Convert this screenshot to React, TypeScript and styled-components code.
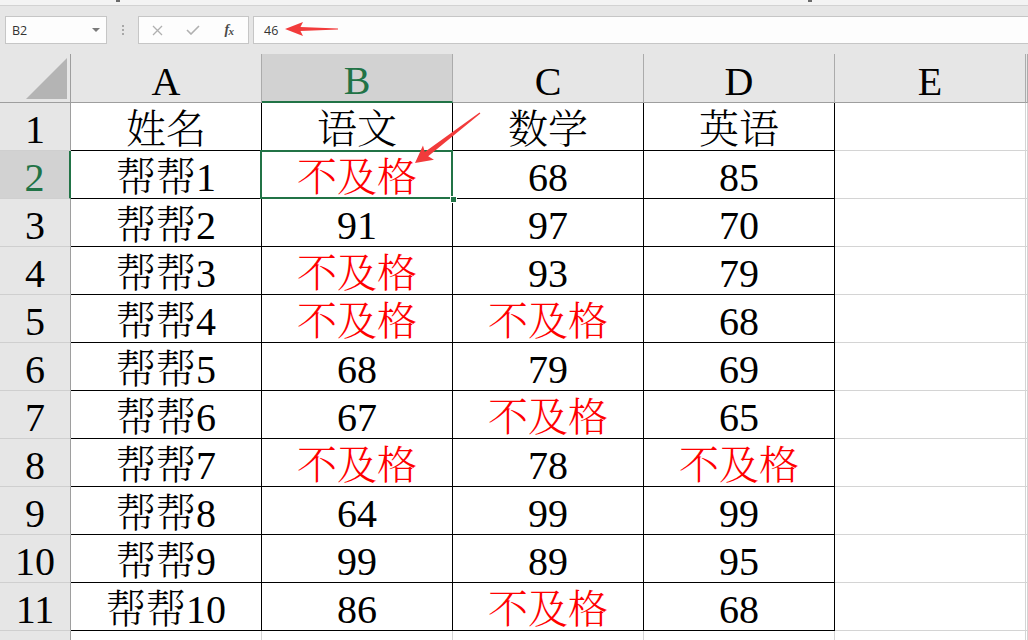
import React from "react";
import styled, { createGlobalStyle, css } from "styled-components";

const GlobalStyle = createGlobalStyle`
  *, *::before, *::after { box-sizing: border-box; }
  html, body { margin: 0; padding: 0; background: #ffffff; overflow: hidden; }
  body { width: 1028px; height: 640px; font-family: "Liberation Serif", "Noto Serif CJK SC", "Noto Sans CJK SC", serif; }
`;

const GREEN = "#217346";

const Page = styled.div`
  position: relative;
  width: 1028px;
  height: 640px;
  overflow: hidden;
`;

const TopStrip = styled.div`
  height: 6px;
  background: #f3f3f3;
  border-bottom: 1px solid #d2d2d2;
  display: flex;
  align-items: flex-start;
`;

const Mark = styled.span<{ $gap: number }>`
  margin-left: ${(p) => p.$gap}px;
  width: 4px;
  height: 2px;
  background: #6a6a6a;
`;

const FormulaBar = styled.div`
  height: 48px;
  background: #e6e6e6;
  display: flex;
  align-items: flex-start;
  padding-top: 10px;
  padding-left: 5px;
  font-family: "Open Sans", "Noto Sans", sans-serif;
  font-size: 12.5px;
  color: #333333;
`;

const NameBox = styled.div`
  width: 102px;
  height: 28px;
  background: #fdfdfd;
  border: 1px solid #c6c6c6;
  display: flex;
  align-items: center;
  justify-content: space-between;
  padding: 0 6px 0 6px;
`;

const DropArrow = styled.span`
  width: 0;
  height: 0;
  border-left: 4px solid transparent;
  border-right: 4px solid transparent;
  border-top: 4px solid #7a7a7a;
`;

const Grip = styled.div`
  width: 31px;
  height: 28px;
  display: flex;
  flex-direction: column;
  align-items: center;
  justify-content: center;
  gap: 2px;
`;

const GripDot = styled.span`
  width: 2px;
  height: 2px;
  background: #a8a8a8;
`;

const FxBox = styled.div`
  width: 111px;
  height: 28px;
  background: #fdfdfd;
  border: 1px solid #c6c6c6;
  display: flex;
  align-items: center;
`;

const FxSlot = styled.div`
  width: 36px;
  height: 100%;
  display: flex;
  align-items: center;
  justify-content: center;
`;

const FxLabel = styled.span`
  font-family: "Liberation Serif", serif;
  font-style: italic;
  font-weight: bold;
  font-size: 14px;
  color: #4a4a4a;
  letter-spacing: -0.5px;
  sub {
    font-size: 11px;
    vertical-align: -1px;
  }
`;

const Input = styled.div`
  flex: 1;
  margin-left: 4px;
  height: 28px;
  background: #fdfdfd;
  border: 1px solid #c6c6c6;
  border-right: none;
  display: flex;
  align-items: center;
  padding-left: 10px;
`;

const Sheet = styled.div`
  display: grid;
  grid-template-columns: 71px repeat(5, 191px) 1fr;
  grid-template-rows: 49px;
  grid-auto-rows: 48px;
  font-size: 40px;
  line-height: 40px;
  font-weight: 300;
`;

const HeadBase = css`
  background: #e6e6e6;
  display: flex;
  align-items: flex-end;
  justify-content: center;
  white-space: nowrap;
`;

const Corner = styled.div`
  ${HeadBase};
  justify-content: flex-end;
  border-right: 1px solid #9e9e9e;
  border-bottom: 1px solid #9e9e9e;
  padding: 0 3px 3px 0;
`;

const CornerTriangle = styled.span`
  width: 41px;
  height: 41px;
  background: #b4b4b4;
  clip-path: polygon(100% 0, 100% 100%, 0 100%);
`;

const ColHead = styled.div<{ $sel?: boolean }>`
  ${HeadBase};
  border-right: 1px solid #ababab;
  border-bottom: 1px solid #9e9e9e;
  ${(p) =>
    p.$sel &&
    css`
      background: #d2d2d2;
      color: ${GREEN};
      border-bottom: 2px solid ${GREEN};
    `}
`;

const RowHead = styled.div<{ $sel?: boolean }>`
  ${HeadBase};
  border-right: 1px solid #9e9e9e;
  border-bottom: 1px solid #cfcfcf;
  ${(p) =>
    p.$sel &&
    css`
      background: #d2d2d2;
      color: ${GREEN};
      border-right: 2px solid ${GREEN};
    `}
`;

const Cell = styled.div<{ $table?: boolean; $red?: boolean; $sel?: boolean }>`
  background: #ffffff;
  display: flex;
  align-items: flex-end;
  justify-content: center;
  white-space: nowrap;
  color: ${(p) => (p.$red ? "#ff0000" : "#000000")};
  border-right: 1px solid ${(p) => (p.$table ? "#000000" : "#d4d4d4")};
  border-bottom: 1px solid ${(p) => (p.$table ? "#000000" : "#d4d4d4")};
  ${(p) =>
    p.$sel &&
    css`
      position: relative;
      z-index: 2;
      &::after {
        content: "";
        position: absolute;
        top: -1px;
        left: -2px;
        right: -1px;
        bottom: -1px;
        border: 2px solid ${GREEN};
      }
      &::before {
        content: "";
        position: absolute;
        right: -5px;
        bottom: -5px;
        width: 7px;
        height: 7px;
        background: ${GREEN};
        border: 1px solid #ffffff;
        z-index: 3;
      }
    `}
`;

const Overlay = styled.svg`
  position: absolute;
  left: 0;
  top: 0;
  width: 1028px;
  height: 640px;
  pointer-events: none;
  z-index: 10;
`;

const cols = ["A", "B", "C", "D", "E"];
const data: string[][] = [
  ["姓名", "语文", "数学", "英语"],
  ["帮帮1", "不及格", "68", "85"],
  ["帮帮2", "91", "97", "70"],
  ["帮帮3", "不及格", "93", "79"],
  ["帮帮4", "不及格", "不及格", "68"],
  ["帮帮5", "68", "79", "69"],
  ["帮帮6", "67", "不及格", "65"],
  ["帮帮7", "不及格", "78", "不及格"],
  ["帮帮8", "64", "99", "99"],
  ["帮帮9", "99", "89", "95"],
  ["帮帮10", "86", "不及格", "68"],
];

export default function App() {
  const rows = [...data, ["", "", "", ""]];
  return (
    <Page>
      <GlobalStyle />
      <TopStrip>
        <Mark $gap={116} />
        <Mark $gap={688} />
      </TopStrip>
      <FormulaBar>
        <NameBox>
          <span>B2</span>
          <DropArrow />
        </NameBox>
        <Grip>
          <GripDot />
          <GripDot />
          <GripDot />
        </Grip>
        <FxBox>
          <FxSlot>
            <svg width="11" height="11" viewBox="0 0 11 11">
              <path d="M1 1 L10 10 M10 1 L1 10" stroke="#b0b0b0" strokeWidth="1.3" fill="none" />
            </svg>
          </FxSlot>
          <FxSlot>
            <svg width="14" height="10" viewBox="0 0 14 10">
              <path d="M1 5 L5 9 L13 1" stroke="#b0b0b0" strokeWidth="1.6" fill="none" />
            </svg>
          </FxSlot>
          <FxSlot>
            <FxLabel>
              f<sub>x</sub>
            </FxLabel>
          </FxSlot>
        </FxBox>
        <Input>46</Input>
      </FormulaBar>
      <Sheet>
        <Corner>
          <CornerTriangle />
        </Corner>
        {cols.map((c) => (
          <ColHead key={c} $sel={c === "B"}>
            {c}
          </ColHead>
        ))}
        <ColHead />
        {rows.map((r, i) => {
          const inTable = i < data.length;
          return (
            <React.Fragment key={i}>
              <RowHead $sel={i === 1}>{inTable ? i + 1 : ""}</RowHead>
              {r.map((v, j) => (
                <Cell key={j} $table={inTable} $red={v === "不及格"} $sel={i === 1 && j === 1}>
                  {v}
                </Cell>
              ))}
              <Cell />
              <Cell />
            </React.Fragment>
          );
        })}
      </Sheet>
      <Overlay viewBox="0 0 1028 640">
        <g transform="translate(285 29)" fill="#f23b3b">
          <polygon points="0,0 18,-7 15.5,-2 53,-0.6 53,0.6 15.5,2 18,7" />
        </g>
        <g transform="translate(415 163) rotate(-37.6)" fill="#f23b3b">
          <polygon points="0,0 17,-9 14.5,-2.8 82,-0.7 82,0.7 14.5,2.8 17,9" />
        </g>
      </Overlay>
    </Page>
  );
}
